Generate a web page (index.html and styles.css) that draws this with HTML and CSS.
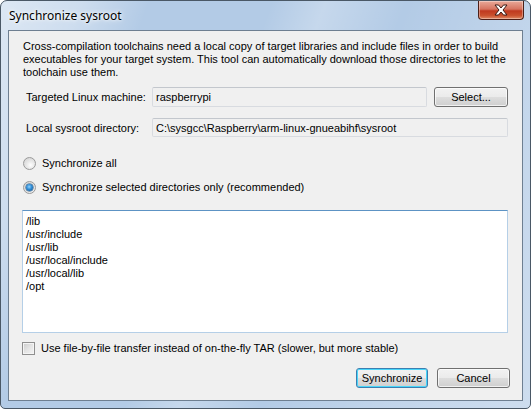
FILE: index.html
```html
<!DOCTYPE html>
<html>
<head>
<meta charset="utf-8">
<link rel="stylesheet" href="styles.css">
</head>
<body>
<div class="window">
  <div class="titlebar">
    <span class="title">Synchronize sysroot</span>
    <div class="close">
      <svg width="16" height="12" viewBox="0 0 16 12">
        <path d="M2 1 L5.5 1 L8 4 L10.5 1 L14 1 L10 6 L14 11 L10.5 11 L8 8 L5.5 11 L2 11 L6 6 Z" fill="#fff" stroke="#3a1a14" stroke-width="1" stroke-linejoin="round"/>
      </svg>
    </div>
  </div>
  <div class="client">
    <p class="desc">Cross-compilation toolchains need a local copy of target libraries and include files in order to build<br>executables for your target system. This tool can automatically download those directories to let the<br>toolchain use them.</p>
    <div class="field-row first">
      <span class="label">Targeted Linux machine:</span>
      <div class="input">raspberrypi</div>
      <button class="btn select">Select...</button>
    </div>
    <div class="field-row second">
      <span class="label">Local sysroot directory:</span>
      <div class="input wide">C:\sysgcc\Raspberry\arm-linux-gnueabihf\sysroot</div>
    </div>
    <div class="option-row r1"><span class="radio"></span><span>Synchronize all</span></div>
    <div class="option-row r2"><span class="radio checked"></span><span>Synchronize selected directories only (recommended)</span></div>
    <div class="textarea">/lib<br>/usr/include<br>/usr/lib<br>/usr/local/include<br>/usr/local/lib<br>/opt</div>
    <div class="option-row check"><span class="checkbox"></span><span>Use file-by-file transfer instead of on-the-fly TAR (slower, but more stable)</span></div>
    <div class="buttons">
      <button class="btn default">Synchronize</button>
      <button class="btn">Cancel</button>
    </div>
  </div>
</div>
</body>
</html>
```
FILE: styles.css
```css
html, body {
  margin: 0;
  padding: 0;
  background: #ffffff;
}
.window {
  width: 531px;
  height: 409px;
  box-sizing: border-box;
  border: 1px solid #4a5866;
  border-radius: 7px 7px 5px 5px;
  padding: 0 7px 7px 7px;
  display: flex;
  flex-direction: column;
  background:
    linear-gradient(110deg, rgba(255,255,255,0.55) 0%, rgba(255,255,255,0.35) 12%, rgba(255,255,255,0) 22%, rgba(255,255,255,0) 40%, rgba(255,255,255,0.25) 48%, rgba(255,255,255,0) 60%, rgba(255,255,255,0.2) 80%, rgba(255,255,255,0.35) 100%),
    #b3cbe6;
  font-family: "Liberation Sans", Arial, sans-serif;
  font-size: 11px;
  color: #000;
}
.titlebar {
  height: 29px;
  display: flex;
  justify-content: space-between;
  align-items: flex-start;
}
.title {
  font-family: "Noto Sans", "Open Sans", sans-serif;
  font-size: 12px;
  margin-top: 6px;
  margin-left: 1px;
  color: #000;
  text-shadow: 0 0 6px #fff, 0 0 3px #fff;
}
.close {
  width: 44px;
  height: 18px;
  margin-right: -1px;
  border: 1px solid #4d1f17;
  border-top: none;
  border-radius: 0 0 4px 4px;
  background: linear-gradient(#e9a999 0%, #d67460 45%, #c0391f 55%, #c9502d 80%, #e08a65 100%);
  display: flex;
  align-items: center;
  justify-content: center;
  box-shadow: inset 0 0 0 1px rgba(255,255,255,0.35);
}
.close svg { display: block; }
.client {
  flex: 1;
  border: 1px solid #6e7f91;
  background: #f0f0f0;
  padding: 9px 14px 0 14px;
  display: flex;
  flex-direction: column;
}
.desc {
  margin: 0;
  line-height: 13px;
  white-space: nowrap;
}
.field-row {
  display: flex;
  align-items: center;
}
.field-row.first { margin-top: 8px; height: 20px; }
.field-row.second { margin-top: 11px; height: 19px; }
.label {
  width: 126px;
  padding-left: 3px;
  flex: none;
}
.input {
  box-sizing: border-box;
  height: 19px;
  border: 1px solid #d8dbe0;
  border-top-color: #c3c7cd;
  border-radius: 2px;
  background: #f0f0f0;
  padding-left: 3px;
  display: flex;
  align-items: center;
  width: 275px;
}
.field-row.first .input { height: 20px; }
.input.wide { width: 356px; }
.btn {
  font-family: "Liberation Sans", Arial, sans-serif;
  font-size: 11px;
  color: #000;
  box-sizing: border-box;
  height: 20px;
  width: 74px;
  padding: 0;
  border: 1px solid #707070;
  border-radius: 3px;
  background: linear-gradient(#f2f2f2 0%, #ebebeb 48%, #dddddd 52%, #cfcfcf 100%);
  box-shadow: inset 0 0 0 1px rgba(255,255,255,0.7);
}
.btn.select { margin-left: 7px; }
.option-row {
  display: flex;
  align-items: center;
  height: 14px;
}
.option-row.r1 { margin-top: 19px; }
.option-row.r2 { margin-top: 10px; }
.option-row.check { margin-top: 8px; }
.radio {
  width: 13px;
  height: 13px;
  box-sizing: border-box;
  border-radius: 50%;
  border: 1px solid #9a9a9a;
  background: radial-gradient(circle at 60% 65%, #ffffff 0%, #e6e6e6 45%, #cfcfcf 100%);
  margin-left: 0;
  margin-right: 6px;
  flex: none;
  display: flex;
  align-items: center;
  justify-content: center;
}
.radio.checked::after {
  content: "";
  width: 7px;
  height: 7px;
  border-radius: 50%;
  background: radial-gradient(circle at 45% 40%, #8fd3ff 0%, #2f8bd4 45%, #14558f 90%);
  box-shadow: 0 0 0 0.5px #1d4f79;
}
.textarea {
  box-sizing: border-box;
  margin-top: 16px;
  height: 123px;
  width: 486px;
  margin-left: -1px;
  background: #fff;
  border: 1px solid #b5cfe7;
  border-top-color: #5d93c4;
  padding: 4px 0 0 3px;
  line-height: 13px;
}
.checkbox {
  width: 13px;
  height: 13px;
  box-sizing: border-box;
  border: 1px solid #8f8f8f;
  background: linear-gradient(135deg, #cbcbcb 0%, #e4e4e4 50%, #f4f4f4 100%);
  box-shadow: inset 0 0 0 1px #f4f4f4;
  margin-left: -1px;
  margin-right: 6px;
  flex: none;
}
.buttons {
  margin-top: 13px;
  display: flex;
  justify-content: flex-end;
  gap: 9px;
  margin-right: -2px;
}
.btn.default {
  border-color: #3c7fb1;
  box-shadow: inset 0 0 0 1px #48d6fa;
  width: 72px;
}
.buttons .btn:last-child { width: 73px; }
```
